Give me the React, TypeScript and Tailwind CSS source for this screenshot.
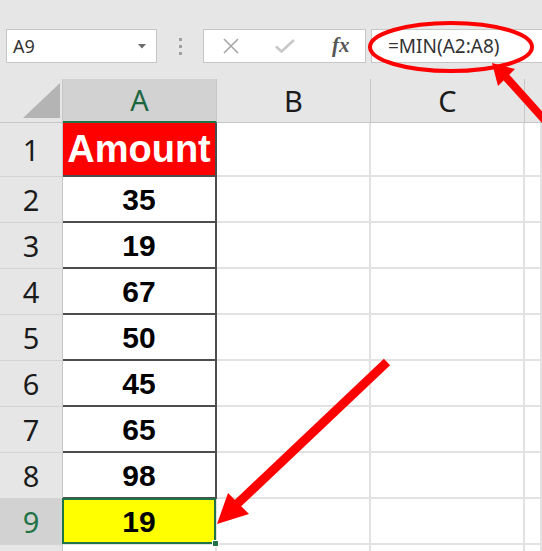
import React from "react";

const data = [
  { n: 2, v: "35" },
  { n: 3, v: "19" },
  { n: 4, v: "67" },
  { n: 5, v: "50" },
  { n: 6, v: "45" },
  { n: 7, v: "65" },
  { n: 8, v: "98" },
];

const uiFont = { fontFamily: '"Noto Sans", "Open Sans", sans-serif' };
const cellFont = { fontFamily: '"Liberation Sans", Arial, sans-serif' };

const RowHead: React.FC<{ n?: number; active?: boolean }> = ({ n, active }) => (
  <div
    className={
      "flex w-[63px] shrink-0 items-center justify-center border-b border-r border-b-[#d4d4d4] border-r-[#c6c6c6] text-[29px] " +
      (active ? "bg-[#d2d2d2] text-[#217346]" : "bg-[#e6e6e6] text-[#1b1b1b]")
    }
    style={uiFont}
  >
    {n}
  </div>
);

const Blank: React.FC<{ grow?: boolean }> = ({ grow }) => (
  <div
    className={
      "shrink-0 border-b-2 border-r-2 border-[#e2e2e2] bg-white " +
      (grow ? "flex-1" : "w-[154px]")
    }
  />
);

export default function App() {
  return (
    <div className="relative h-[551px] w-[542px] overflow-hidden bg-white">
      {/* formula bar */}
      <div className="flex h-[79px] items-start bg-[#e6e6e6] pt-[29px]" style={uiFont}>
        <div className="ml-[6px] flex h-[34px] w-[151px] items-center justify-between border border-[#c6c6c6] bg-white pl-[6px] pr-[10px]">
          <span className="text-[18px] text-[#333]">A9</span>
          <svg width="8" height="5" viewBox="0 0 8 5">
            <path d="M0 0h8L4 4.5z" fill="#6b6b6b" />
          </svg>
        </div>
        <div className="flex h-[34px] w-[46px] flex-col items-center justify-center gap-[4px]">
          <span className="h-[3px] w-[3px] bg-[#a0a0a0]" />
          <span className="h-[3px] w-[3px] bg-[#a0a0a0]" />
          <span className="h-[3px] w-[3px] bg-[#a0a0a0]" />
        </div>
        <div className="flex h-[34px] w-[163px] items-center border border-[#c6c6c6] bg-white">
          <svg width="16" height="16" viewBox="0 0 16 16" className="ml-[19px]">
            <path d="M1 1L15 15M15 1L1 15" stroke="#a6a6a6" strokeWidth="1.6" />
          </svg>
          <svg width="20" height="14" viewBox="0 0 20 14" className="ml-[36px]">
            <path d="M1 7.5L6.5 12.5L19 1" stroke="#c8c8c8" strokeWidth="2.6" fill="none" />
          </svg>
          <span
            className="ml-[37px] text-[21px] font-bold italic text-[#555]"
            style={{ fontFamily: '"Liberation Serif", "Times New Roman", serif' }}
          >
            fx
          </span>
        </div>
        <div className="ml-[5px] flex h-[34px] flex-1 items-center border border-r-0 border-[#c6c6c6] bg-white pl-[16px]">
          <span className="text-[19px] text-[#333]">=MIN(A2:A8)</span>
        </div>
      </div>

      {/* column headers */}
      <div className="flex h-[44px]" style={uiFont}>
        <div className="relative w-[63px] shrink-0 border-b border-r border-[#c6c6c6] bg-[#e6e6e6]">
          <svg width="63" height="43" viewBox="0 0 63 43" className="absolute left-0 top-0">
            <path d="M23 39L60 4V39z" fill="#b4b4b4" />
          </svg>
        </div>
        <div className="flex w-[154px] shrink-0 items-center justify-center border-b-2 border-r border-b-[#217346] border-r-[#c6c6c6] bg-[#d2d2d2] text-[29px] text-[#1e6640]">
          A
        </div>
        <div className="flex w-[154px] shrink-0 items-center justify-center border-b border-r border-[#c6c6c6] bg-[#e6e6e6] text-[29px] text-[#1b1b1b]">
          B
        </div>
        <div className="flex w-[154px] shrink-0 items-center justify-center border-b border-r border-[#c6c6c6] bg-[#e6e6e6] text-[29px] text-[#1b1b1b]">
          C
        </div>
        <div className="flex-1 border-b border-[#c6c6c6] bg-[#e6e6e6]" />
      </div>

      {/* row 1 */}
      <div className="flex h-[54px]">
        <RowHead n={1} />
        <div
          className="flex w-[154px] shrink-0 items-center justify-center border-b-2 border-r-2 border-[#4d4d4d] bg-[#ff0000] text-[38px] font-bold text-white"
          style={cellFont}
        >
          Amount
        </div>
        <Blank />
        <Blank />
        <Blank grow />
      </div>

      {data.map((r) => (
        <div key={r.n} className="flex h-[46px]">
          <RowHead n={r.n} />
          <div
            className="flex w-[154px] shrink-0 items-center justify-center border-b-2 border-r-2 border-[#4d4d4d] bg-white text-[30px] font-bold text-black"
            style={cellFont}
          >
            {r.v}
          </div>
          <Blank />
          <Blank />
          <Blank grow />
        </div>
      ))}

      {/* row 9 (selected) */}
      <div className="flex h-[46px]">
        <RowHead n={9} active />
        <div className="relative w-[154px] shrink-0 border-b-2 border-r-2 border-[#e2e2e2]">
          <div
            className="absolute -left-[1px] -top-[1px] bottom-[-1px] right-[-1px] flex items-center justify-center border-2 border-[#217346] bg-[#ffff00] text-[30px] font-bold text-black"
            style={cellFont}
          >
            19
          </div>
          <span className="absolute -bottom-[4px] -right-[4px] h-[7px] w-[7px] border border-white bg-[#217346]" />
        </div>
        <Blank />
        <Blank />
        <Blank grow />
      </div>

      {/* row 10, only its top edge shows */}
      <div className="flex h-[46px]">
        <RowHead />
        <Blank />
        <Blank />
        <Blank />
        <Blank grow />
      </div>

      {/* annotations */}
      <svg
        width="542"
        height="551"
        viewBox="0 0 542 551"
        className="pointer-events-none absolute left-0 top-0"
      >
        <ellipse cx="451" cy="47" rx="81" ry="24" fill="none" stroke="#ff0000" strokeWidth="4" />
        <path d="M505 76L550 126" stroke="#ff0000" strokeWidth="8" />
        <path d="M492 63L498 86L515 69z" fill="#ff0000" />
        <path d="M387 362L236 505" stroke="#ff0000" strokeWidth="9" />
        <path d="M217 524L228 493L249 514z" fill="#ff0000" />
      </svg>
    </div>
  );
}
